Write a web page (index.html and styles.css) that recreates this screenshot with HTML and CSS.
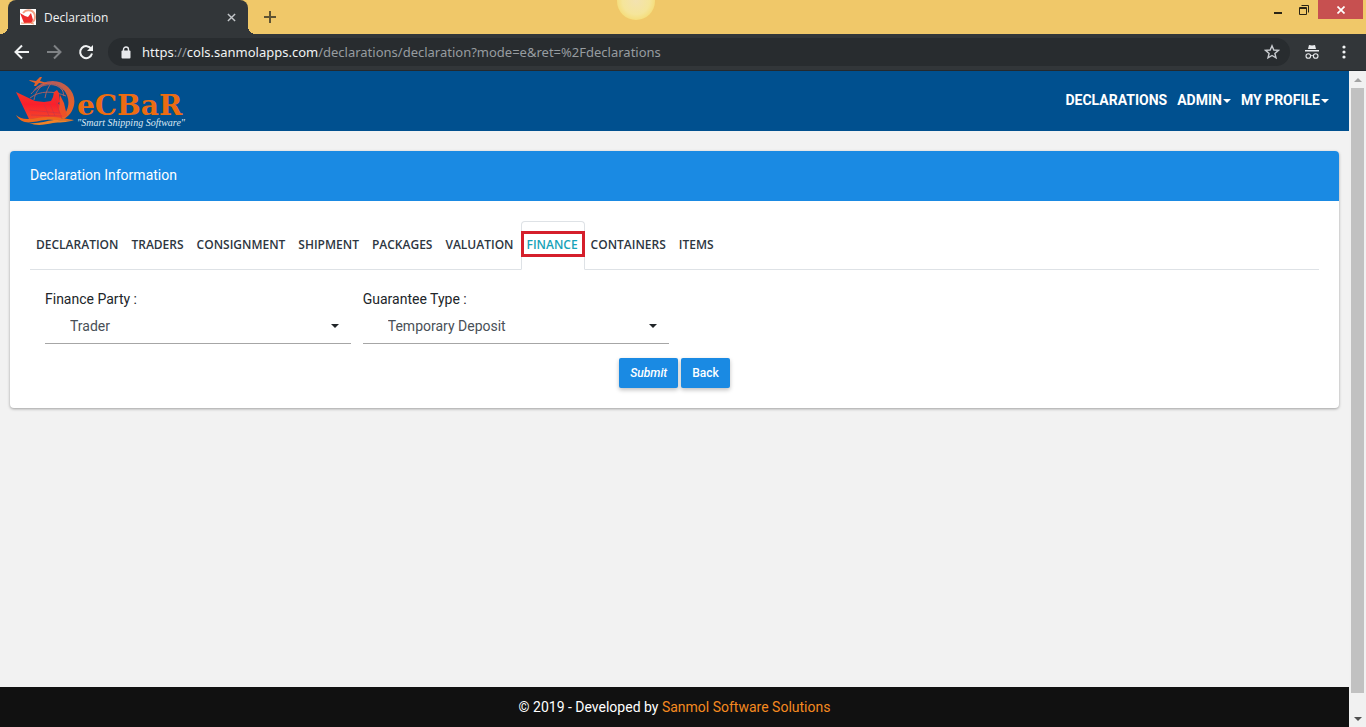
FILE: index.html
```
<!DOCTYPE html>
<html lang="en">
<head>
<meta charset="utf-8">
<title>Declaration</title>
<link rel="stylesheet" href="styles.css">
</head>
<body>
<svg class="defs" aria-hidden="true">
  <defs>
    <linearGradient id="flame" x1="0" y1="0" x2="0" y2="1"><stop offset="0" stop-color="#f03a26"/><stop offset=".5" stop-color="#fa1f2c"/><stop offset="1" stop-color="#f4482a"/></linearGradient>
    <linearGradient id="ring" x1="0" y1="0" x2="1" y2="1"><stop offset="0" stop-color="#a5586a"/><stop offset="1" stop-color="#f2641c"/></linearGradient>
    <symbol id="ship" viewBox="0 0 62 50">
      <path d="M18 15C27 3 44 2 53 11c10 9 8 25-4 32l-3-1c9-8 10-20 2-29C40 5 28 7 18 15z" fill="url(#ring)"/>
      <path d="M16 18C24 8 40 5 49 14M15 22c10-8 24-7 36-2M29 8c-5 4-9 9-10 16M37 6c-4 5-6 10-7 16M41 7c5 3 7 7 8 13M30 7c8 0 14 3 18 8" fill="none" stroke="#b9605c" stroke-width=".9"/>
      <path d="M1 16l19 9 9 1 7-1 2-4 1-5 3-2 2 3 1 9-2 1 3 4 4 9-4 2-32 1z" fill="url(#flame)"/>
      <path d="M45 19l4 8 3 13-5 1-3-7z" fill="#ee5127"/>
      <path d="M14 34l30 3M16 39l31 1M35 28l5 12M29 28l5 12M40 22l5 16" stroke="#c83546" stroke-width=".6"/>
      <path d="M1 39c8 8 22 1 34 2 9 0 15 2 24 3-10 2-20-1-28 0-12 1-23 7-30-5z" fill="#ee6a1d"/>
      <path d="M14 47c9 1 17-2 25-3 7 0 12 1 20 0-8 3-15 2-21 3-9 2-17 3-24 0z" fill="#f08227"/>
      <path d="M14 4l7 1 4-4 2 0-2 4 7 2v1l-8-1-3 3-2 0 1-3-5-2z" fill="#e4622b"/>
    </symbol>
  </defs>
</svg>
<div class="browser">
  <div class="tabstrip">
    <div class="browser-tab">
      <span class="favicon"><svg viewBox="0 0 16 16"><path d="M3 4c4-5 12-3 12 4 0 3-2 5-4 6" fill="none" stroke="#f3a084" stroke-width="2"/><path d="M0 4l5 3 3 1 3-4 2 7-2 3H4z" fill="#ed2b2c"/><path d="M1 14c4 1 8-1 13 1" stroke="#f0956b" fill="none"/></svg></span>
      <span class="browser-tab-title">Declaration</span>
      <button class="icon-btn tab-close" aria-label="Close tab"><svg width="9" height="9" viewBox="0 0 10 10"><path d="M1 1l8 8M9 1L1 9" stroke="#c4c7ca" stroke-width="1.6"/></svg></button>
    </div>
    <button class="icon-btn new-tab" aria-label="New tab"><svg width="12" height="12" viewBox="0 0 12 12"><path d="M6 0v12M0 6h12" stroke="#5e5333" stroke-width="2"/></svg></button>
    <span class="glow"></span>
    <div class="window-controls">
      <button class="icon-btn win-btn" aria-label="Minimize"><svg width="8" height="12" viewBox="0 0 8 12"><path d="M0 8h8v2H0z" fill="#2a2415"/></svg></button>
      <button class="icon-btn win-btn" aria-label="Restore"><svg width="10" height="10" viewBox="0 0 10 10"><path d="M.5 2.500h7v7h-7zM.5 3.500h7M2.500 .5h7v7" fill="none" stroke="#2a2415"/></svg></button>
      <button class="icon-btn win-close" aria-label="Close"><svg width="8" height="8" viewBox="0 0 8 8"><path d="M.5 .5l7 7M7.500 .5l-7 7" stroke="#fff" stroke-width="1.700"/></svg></button>
    </div>
  </div>
  <div class="toolbar">
    <button class="icon-btn nav-btn" aria-label="Back"><svg width="16" height="16" viewBox="0 0 16 16"><path d="M15 8H2M8 1.500L1.500 8 8 14.500" fill="none" stroke="#f1f3f4" stroke-width="2"/></svg></button>
    <button class="icon-btn nav-btn" aria-label="Forward"><svg width="16" height="16" viewBox="0 0 16 16"><path d="M1 8h13M8 1.500L14.500 8 8 14.500" fill="none" stroke="#7f8285" stroke-width="2"/></svg></button>
    <button class="icon-btn nav-btn" aria-label="Reload"><svg width="16" height="16" viewBox="0 0 16 16"><path d="M13.300 5A6 6 0 1 0 14 9.500" fill="none" stroke="#f1f3f4" stroke-width="2"/><path d="M15 1v6H9z" fill="#f1f3f4"/></svg></button>
    <div class="address">
      <svg width="10" height="13" viewBox="0 0 10 13"><path d="M2.500 5V3.500a2.500 2.500 0 0 1 5 0V5" fill="none" stroke="#e8eaed" stroke-width="1.400"/><rect x="0.500" y="4.500" width="9" height="8" rx="1" fill="#e8eaed"/></svg>
      <span class="url"><span class="url-host">https</span>://<span class="url-host">cols.sanmolapps.com</span>/declarations/declaration?mode=e&amp;ret=%2Fdeclarations</span>
      <button class="icon-btn" aria-label="Bookmark"><svg width="16" height="16" viewBox="0 0 16 16"><path d="M8 1.800l1.800 4.200 4.600.4-3.500 3 1.100 4.500L8 11.500l-4 2.400 1.100-4.500-3.500-3L6.200 6z" fill="none" stroke="#c9ccd0" stroke-width="1.400"/></svg></button>
    </div>
    <svg class="incognito" width="14" height="14" viewBox="0 0 14 14"><path d="M4 0l3 .6L10 0l1 4H3zM0 5h14v1.500H0z" fill="#e8eaed"/><path d="M5.500 11c1-.6 2-.6 3 0" fill="none" stroke="#e8eaed"/><circle cx="3.300" cy="11" r="2.300" fill="none" stroke="#e8eaed" stroke-width="1.100"/><circle cx="10.700" cy="11" r="2.300" fill="none" stroke="#e8eaed" stroke-width="1.100"/></svg>
    <button class="icon-btn menu-btn" aria-label="Menu"><svg width="4" height="14" viewBox="0 0 4 14" fill="#f1f3f4"><circle cx="2" cy="2" r="1.600"/><circle cx="2" cy="7" r="1.600"/><circle cx="2" cy="12" r="1.600"/></svg></button>
  </div>
  <div class="viewport">
    <div class="page">
      <header class="site-header">
        <a class="brand" href="#" aria-label="DeCBaR Smart Shipping Software">
          <svg class="brand-mark"><use href="#ship"/></svg>
          <span class="brand-text"><span class="brand-name">eCBaR</span><span class="brand-tag">"Smart Shipping Software"</span></span>
        </a>
        <nav class="site-nav">
          <a href="#">DECLARATIONS</a>
          <a href="#">ADMIN<span class="caret"></span></a>
          <a href="#">MY PROFILE<span class="caret"></span></a>
        </nav>
      </header>
      <main class="content">
        <section class="card">
          <h1 class="card-header">Declaration Information</h1>
          <div class="card-body">
            <nav class="tabs">
              <a href="#">DECLARATION</a>
              <a href="#">TRADERS</a>
              <a href="#">CONSIGNMENT</a>
              <a href="#">SHIPMENT</a>
              <a href="#">PACKAGES</a>
              <a href="#">VALUATION</a>
              <a href="#" class="active">FINANCE<span class="highlight"></span></a>
              <a href="#">CONTAINERS</a>
              <a href="#">ITEMS</a>
            </nav>
            <form>
              <div class="fields">
                <div class="field">
                  <label for="party">Finance Party :</label>
                  <div class="select"><select id="party"><option>Trader</option></select><span class="caret"></span></div>
                </div>
                <div class="field">
                  <label for="guarantee">Guarantee Type :</label>
                  <div class="select"><select id="guarantee"><option>Temporary Deposit</option></select><span class="caret"></span></div>
                </div>
              </div>
              <div class="actions">
                <button type="button" class="btn btn-submit">Submit</button>
                <button type="button" class="btn">Back</button>
              </div>
            </form>
          </div>
        </section>
      </main>
      <footer class="site-footer">© 2019 - Developed by <a href="#">Sanmol Software Solutions</a></footer>
    </div>
    <div class="scrollbar">
      <span class="arrow-up"></span>
      <span class="thumb"></span>
      <span class="arrow-down"></span>
    </div>
  </div>
</div>
</body>
</html>
```
FILE: styles.css
```
* { box-sizing: border-box; }
body { margin: 0; font-family: Roboto, "Liberation Sans", sans-serif; font-size: 14px; color: #212529; }
a { color: inherit; text-decoration: none; }
button, select { font-family: inherit; }
.defs { position: absolute; width: 0; height: 0; }
.icon-btn { display: flex; align-items: center; justify-content: center; padding: 0; border: 0; background: none; }
.browser { display: flex; flex-direction: column; height: 100vh; background: #323639; }

.tabstrip { position: relative; display: flex; height: 34px; padding-left: 8px; background: #f0c869; overflow: hidden; }
.browser-tab { position: relative; display: flex; align-items: center; gap: 8px; width: 240px; padding: 0 12px; border-radius: 8px 8px 0 0; background: #323639; color: #f1f3f4; font: 12px "Open Sans", sans-serif; }
.browser-tab::before, .browser-tab::after { content: ""; position: absolute; bottom: 0; width: 8px; height: 8px; }
.browser-tab::before { left: -8px; background: radial-gradient(circle at 0 0, transparent 8px, #323639 8px); }
.browser-tab::after { right: -8px; background: radial-gradient(circle at 100% 0, transparent 8px, #323639 8px); }
.favicon { display: flex; width: 16px; height: 16px; background: #fff; }
.browser-tab-title { flex: 1; }
.tab-close { width: 9px; }
.new-tab { width: 44px; }
.glow { position: absolute; top: -18px; left: calc(50% - 66px); width: 38px; height: 38px; border-radius: 50%; background: radial-gradient(circle, #f3e2b0 0, #f5e59a 50%, #f5d968 85%, #f1cc63 100%); }
.window-controls { display: flex; height: 19px; margin-left: auto; padding-right: 3px; }
.win-btn { width: 26px; }
.win-close { width: 45px; margin-left: 1px; background: #c75050; }

.toolbar { display: flex; align-items: center; height: 37px; padding: 0 20px 0 6px; border-bottom: 1px solid #24292d; }
.nav-btn { width: 32px; height: 32px; }
.address { display: flex; flex: 1; align-items: center; gap: 11px; height: 28px; margin-left: 6px; padding: 0 10px 0 13px; border-radius: 14px; background: #282c2f; }
.url { flex: 1; color: #979ca0; font: 13px "Noto Sans", sans-serif; }
.url-host { color: #f1f3f4; }
.incognito { margin: 0 23px 0 15px; }

.viewport { display: flex; flex: 1; min-height: 0; }
.page { display: flex; flex: 1; flex-direction: column; background: #f2f2f2; }
.scrollbar { display: flex; flex-direction: column; align-items: center; width: 17px; padding: 7px 0 6px; background: #f1f1f1; }
.arrow-up, .arrow-down { border: 4px solid transparent; }
.arrow-up { border-top: 0; border-bottom-color: #a3a3a3; }
.arrow-down { border-bottom: 0; border-top-color: #505050; }
.thumb { flex: 1; width: 13px; margin: 6px 0 24px; background: #c1c1c1; }

.site-header { display: flex; align-items: center; justify-content: space-between; height: 60px; padding: 0 20px 0 15px; background: #00508f; color: #fff; }
.brand { display: flex; align-items: center; }
.brand-mark { width: 62px; height: 50px; }
.brand-text { display: flex; flex-direction: column; padding-top: 20px; font-family: "Liberation Serif", serif; white-space: nowrap; }
.brand-name { color: #ec6c12; font-family: "DejaVu Serif", serif; font-size: 28px; font-weight: 700; line-height: 24px; }
.brand-tag { color: #dce8f4; font-size: 10px; font-style: italic; line-height: 10px; }
.site-nav { display: flex; gap: 10px; padding-bottom: 2px; font-weight: 700; line-height: 20px; }
.caret { display: inline-block; border: 4px solid transparent; border-top-color: currentColor; border-bottom: 0; vertical-align: middle; }
.site-nav .caret { margin-left: 1px; }

.content { flex: 1; padding: 20px 10px; }
.card { border-radius: 4px; background: #fff; box-shadow: 0 1px 3px rgba(0, 0, 0, .35); }
.card-header { margin: 0; padding: 14px 20px 16px; border-radius: 4px 4px 0 0; background: #1a8ae3; color: #fff; font-size: 14px; font-weight: 400; line-height: 20px; }
.card-body { padding: 20px; }
.tabs { display: flex; height: 49px; border-bottom: 1px solid #dee2e6; font: 600 12px/46px "Open Sans", sans-serif; color: #2d363f; }
.tabs a { position: relative; height: 49px; padding: 0 6px 0 5px; border: 1px solid transparent; border-radius: 4px 4px 0 0; }
.tabs .active { border-color: #dee2e6; border-bottom-color: #fff; background: #fff; color: #17a2b8; }
.highlight { position: absolute; inset: 9px -1px 12px -1px; border: 3px solid #d51f2b; }

.fields { display: grid; grid-template-columns: repeat(4, 1fr); gap: 12px; padding: 19px 15px 0; }
.field label { display: block; line-height: 20px; }
.select { position: relative; display: flex; align-items: center; border-bottom: 1px solid #a6a6a6; }
.select select { flex: 1; height: 34px; padding: 0 25px; border: 0; background: none; color: #495057; font-size: 14px; appearance: none; }
.select .caret { position: absolute; right: 12px; color: #212529; }
.actions { display: flex; justify-content: center; gap: 3px; padding-top: 14px; }
.btn { height: 30px; padding: 0 11px; border: 0; border-radius: 2px; background: #1a8ae3; box-shadow: 0 2px 4px rgba(0, 0, 0, .25); color: #fff; font-size: 12px; font-weight: 500; }
.btn-submit { font-style: italic; }

.site-footer { height: 40px; background: #111; color: #fff; line-height: 40px; text-align: center; }
.site-footer a { color: #f58a20; }
```
